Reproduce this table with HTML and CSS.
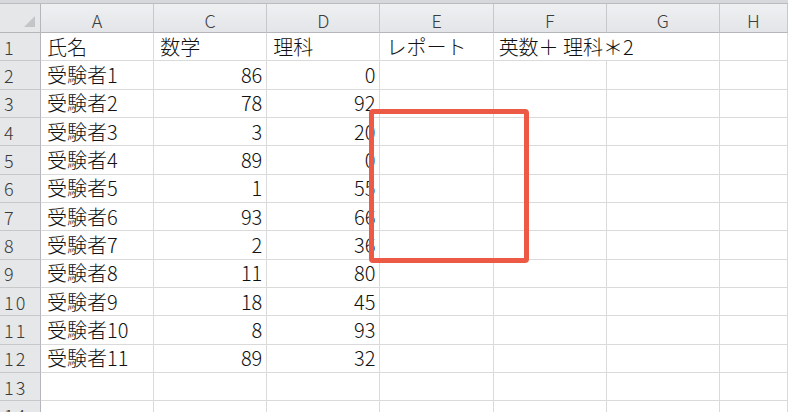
FILE: index.html
```html
<!DOCTYPE html>
<html lang="ja">
<head>
<meta charset="utf-8">
<link rel="stylesheet" href="styles.css">
</head>
<body>
<div class="sheet">
  <div class="topbar"></div>
  <div class="grid">
    <div class="corner"><span class="tri"></span></div>
    <div class="ch">A</div><div class="ch">C</div><div class="ch">D</div><div class="ch">E</div><div class="ch">F</div><div class="ch">G</div><div class="ch">H</div>

    <div class="rh">1</div><div class="c">氏名</div><div class="c">数学</div><div class="c">理科</div><div class="c">レポート</div><div class="c span2">英数＋ 理科＊2</div><div class="c"></div>
    <div class="rh">2</div><div class="c">受験者1</div><div class="c n">86</div><div class="c n">0</div><div class="c"></div><div class="c"></div><div class="c"></div><div class="c"></div>
    <div class="rh">3</div><div class="c">受験者2</div><div class="c n">78</div><div class="c n">92</div><div class="c"></div><div class="c"></div><div class="c"></div><div class="c"></div>
    <div class="rh">4</div><div class="c">受験者3</div><div class="c n">3</div><div class="c n">20</div><div class="c"></div><div class="c"></div><div class="c"></div><div class="c"></div>
    <div class="rh">5</div><div class="c">受験者4</div><div class="c n">89</div><div class="c n">0</div><div class="c"></div><div class="c"></div><div class="c"></div><div class="c"></div>
    <div class="rh">6</div><div class="c">受験者5</div><div class="c n">1</div><div class="c n">55</div><div class="c"></div><div class="c"></div><div class="c"></div><div class="c"></div>
    <div class="rh">7</div><div class="c">受験者6</div><div class="c n">93</div><div class="c n">66</div><div class="c"></div><div class="c"></div><div class="c"></div><div class="c"></div>
    <div class="rh">8</div><div class="c">受験者7</div><div class="c n">2</div><div class="c n">36</div><div class="c"></div><div class="c"></div><div class="c"></div><div class="c"></div>
    <div class="rh">9</div><div class="c">受験者8</div><div class="c n">11</div><div class="c n">80</div><div class="c"></div><div class="c"></div><div class="c"></div><div class="c"></div>
    <div class="rh">10</div><div class="c">受験者9</div><div class="c n">18</div><div class="c n">45</div><div class="c"></div><div class="c"></div><div class="c"></div><div class="c"></div>
    <div class="rh">11</div><div class="c">受験者10</div><div class="c n">8</div><div class="c n">93</div><div class="c"></div><div class="c"></div><div class="c"></div><div class="c"></div>
    <div class="rh">12</div><div class="c">受験者11</div><div class="c n">89</div><div class="c n">32</div><div class="c"></div><div class="c"></div><div class="c"></div><div class="c"></div>
    <div class="rh">13</div><div class="c"></div><div class="c"></div><div class="c"></div><div class="c"></div><div class="c"></div><div class="c"></div><div class="c"></div>
    <div class="rh">14</div><div class="c"></div><div class="c"></div><div class="c"></div><div class="c"></div><div class="c"></div><div class="c"></div><div class="c"></div>
  </div>
  <div class="highlight"></div>
</div>
</body>
</html>
```
FILE: styles.css
```css
html, body {
  margin: 0;
  padding: 0;
  background: #ffffff;
}
.sheet {
  position: relative;
  width: 788px;
  height: 412px;
  overflow: hidden;
  font-family: "Noto Sans CJK JP", "Noto Sans", sans-serif;
}
.topbar {
  height: 3px;
  background: #d6d8db;
  border-bottom: 1px solid #b9bcc0;
}
.grid {
  display: grid;
  grid-template-columns: 41px repeat(6, 113.17px) 1fr;
  grid-template-rows: 29px repeat(14, 28.33px);
}
.corner {
  position: relative;
  background: #e6e7e9;
  border-right: 1px solid #b4b6b9;
  border-bottom: 1px solid #b4b6b9;
}
.tri {
  position: absolute;
  right: 5px;
  bottom: 5px;
  width: 0;
  height: 0;
  border-left: 11px solid transparent;
  border-bottom: 11px solid #c3c5c8;
}
.ch {
  background: linear-gradient(#eef0f2, #e3e5e8);
  border-right: 1px solid #c6c8cb;
  border-bottom: 1px solid #b4b6b9;
  display: flex;
  align-items: center;
  justify-content: center;
  font-family: "Noto Sans CJK JP", "Noto Sans", sans-serif;
  font-weight: 300;
  font-size: 18px;
  color: #3c3c3c;
  padding-top: 4px;
  line-height: 1;
}
.rh {
  background: #e6e7e9;
  border-right: 1px solid #b4b6b9;
  border-bottom: 1px solid #c6c8cb;
  display: flex;
  align-items: center;
  padding-left: 4px;
  font-family: "Noto Sans CJK JP", "Noto Sans", sans-serif;
  font-weight: 300;
  font-size: 18px;
  color: #3a3a3a;
  letter-spacing: 2px;
  font-variant-numeric: tabular-nums;
}
.c {
  border-right: 1px solid #dadada;
  border-bottom: 1px solid #dadada;
  display: flex;
  align-items: center;
  padding: 0 4px 0 6px;
  font-size: 20px;
  font-weight: 300;
  color: #111111;
  white-space: pre;
  overflow: visible;
  line-height: 1;
}
.n {
  justify-content: flex-end;
}
.span2 {
  grid-column: span 2;
  padding-left: 5px;
}
.highlight {
  position: absolute;
  left: 369px;
  top: 109px;
  width: 150px;
  height: 144px;
  border: 5px solid #ec5a45;
  border-radius: 4px;
}
```
